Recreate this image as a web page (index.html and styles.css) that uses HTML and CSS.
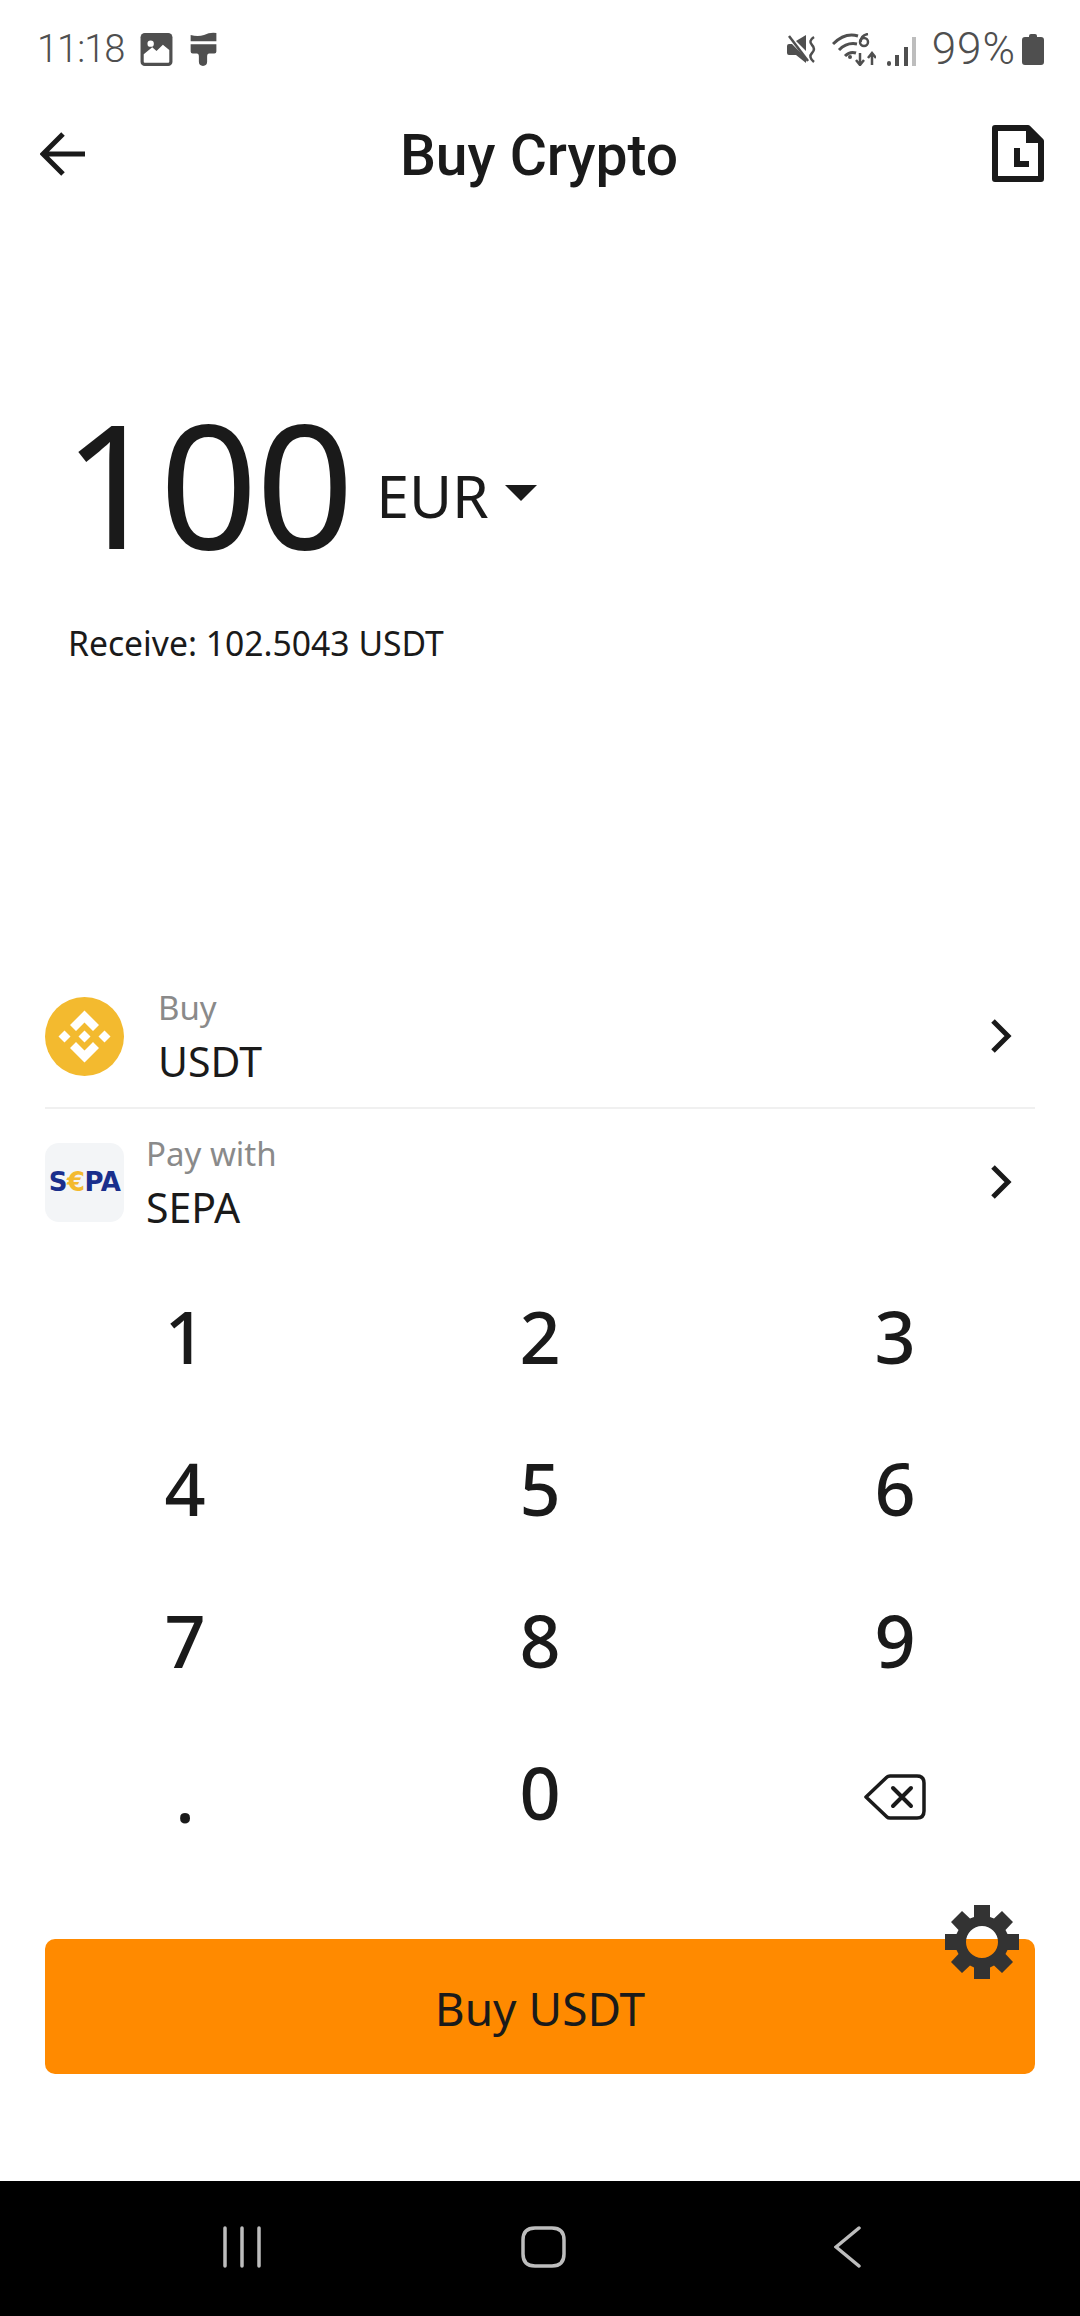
FILE: index.html
```html
<!DOCTYPE html>
<html lang="en">
<head>
<meta charset="utf-8">
<title>Buy Crypto</title>
<link rel="stylesheet" href="styles.css">
</head>
<body>
<div class="screen">
  <div class="status">
    <div class="status-left">
      <span class="time">11:18</span>
      <svg class="ic-image" width="33" height="33" viewBox="0 0 30 31"><rect width="30" height="31" rx="4" fill="#4f4f4f"/><path d="M3 27V20L11 13.500L15 17L21 11L27 16V27Q27 28 26 28H4Q3 28 3 27Z" fill="#fff"/><circle cx="9.500" cy="10" r="3" fill="#fff"/></svg>
      <svg class="ic-brush" width="28" height="35" viewBox="0 0 26 34"><path d="M1 3Q8 5 14 3Q20 0 26 1V9H1Z" fill="#4f4f4f"/><path d="M1 12H26V19Q26 21 24 21H19Q17 21 17 24V29Q17 33 13 33Q9 33 9 29V24Q9 21 7 21H3Q1 21 1 19Z" fill="#4f4f4f"/></svg>
    </div>
    <div class="status-right">
      <svg class="ic-mute" width="30" height="29" viewBox="0 0 30 29"><path d="M0 11Q0 9 2 9H5L19 23V28L9 20H2Q0 20 0 18Z" fill="#4f4f4f"/><path d="M9 6L19 0V16Z" fill="#4f4f4f"/><path d="M2 1L21 26" stroke="#4f4f4f" stroke-width="2.500"/><path d="M27 2Q21 6 25 10Q29 14 25 18Q21 22 27 27" fill="none" stroke="#4f4f4f" stroke-width="2.500"/></svg>
      <svg class="ic-wifi" width="44" height="33" viewBox="0 0 44 33"><path d="M1 11Q13 -1 26 3" fill="none" stroke="#4f4f4f" stroke-width="3"/><path d="M7 17Q15 9 25 11" fill="none" stroke="#4f4f4f" stroke-width="3"/><path d="M13 23Q18 18 24 20" fill="none" stroke="#4f4f4f" stroke-width="3"/><circle cx="18" cy="24" r="2" fill="#4f4f4f"/><circle cx="32" cy="9" r="4" fill="none" stroke="#4f4f4f" stroke-width="2.500"/><path d="M36 1Q29 2 28.500 9" fill="none" stroke="#4f4f4f" stroke-width="2.500"/><path d="M28 20V31M24 27L28 32L32 27M40 32V21M36 25L40 20L44 25" fill="none" stroke="#4f4f4f" stroke-width="2.500"/></svg>
      <svg class="ic-signal" width="30" height="29" viewBox="0 0 30 29"><rect x="0" y="24" width="4" height="5" rx="2" fill="#4f4f4f"/><rect x="8" y="18" width="4" height="11" fill="#4f4f4f"/><rect x="17" y="10" width="4" height="19" fill="#4f4f4f"/><rect x="25" y="0" width="4" height="29" fill="#bdbdbd"/></svg>
      <span class="battery-text">99%</span>
      <svg class="ic-battery" width="22" height="31" viewBox="0 0 22 31"><path d="M7 2Q7 0 9 0H13Q15 0 15 2V3H19Q22 3 22 6V28Q22 31 19 31H3Q0 31 0 28V6Q0 3 3 3H7Z" fill="#4f4f4f"/></svg>
    </div>
  </div>

  <header class="topbar">
    <svg class="top-icon" width="46" height="44" viewBox="0 0 46 44"><path d="M45 22H4M23 2L3 22L23 42" fill="none" stroke="#1a1a1a" stroke-width="5"/></svg>
    <h1 class="title">Buy Crypto</h1>
    <svg class="top-icon" width="52" height="57" viewBox="0 0 52 57"><path d="M3 3H36L49 16V54H3Z" fill="none" stroke="#1a1a1a" stroke-width="6" stroke-linejoin="round"/><path d="M34 3L49 18H34Z" fill="#1a1a1a"/><path d="M25 23V39H37" fill="none" stroke="#1a1a1a" stroke-width="6"/></svg>
  </header>

  <section class="amount">
    <div class="amount-line">
      <span class="value">100</span>
      <span class="currency">EUR</span>
      <svg class="caret" width="32" height="16" viewBox="0 0 32 16"><path d="M0 0H32L16 16Z" fill="#1a1a1a"/></svg>
    </div>
    <p class="receive">Receive: 102.5043 USDT</p>
  </section>

  <section class="options">
    <div class="option option-first">
      <svg class="option-icon" width="79" height="79" viewBox="0 0 79 79"><circle cx="39.500" cy="39.500" r="39.500" fill="#f3ba2f"/><g fill="#fff"><path d="M39.500 13.500L54 28L48 34L39.500 25.500L31 34L25 28Z"/><path d="M39.500 65.500L25 51L31 45L39.500 53.500L48 45L54 51Z"/><path d="M13.500 39.500L19.500 33.500L25.500 39.500L19.500 45.500Z"/><path d="M53.500 39.500L59.500 33.500L65.500 39.500L59.500 45.500Z"/><path d="M33.500 39.500L39.500 33.500L45.500 39.500L39.500 45.500Z"/></g></svg>
      <div class="option-text option-text-buy">
        <span class="option-label">Buy</span>
        <span class="option-value">USDT</span>
      </div>
      <svg class="chevron" width="24" height="36" viewBox="0 0 24 36"><path d="M4 3L19 18L4 33" fill="none" stroke="#1a1a1a" stroke-width="5"/></svg>
    </div>
    <div class="option option-second">
      <div class="sepa-tile"><span class="sepa">S<em class="sepa-euro">€</em>PA</span></div>
      <div class="option-text">
        <span class="option-label">Pay with</span>
        <span class="option-value">SEPA</span>
      </div>
      <svg class="chevron" width="24" height="36" viewBox="0 0 24 36"><path d="M4 3L19 18L4 33" fill="none" stroke="#1a1a1a" stroke-width="5"/></svg>
    </div>
  </section>

  <section class="keypad">
    <div class="key">1</div><div class="key">2</div><div class="key">3</div>
    <div class="key">4</div><div class="key">5</div><div class="key">6</div>
    <div class="key">7</div><div class="key">8</div><div class="key">9</div>
    <div class="key key-dot">.</div><div class="key">0</div>
    <div class="key"><svg class="backspace" width="62" height="46" viewBox="0 0 62 46"><path d="M2 23L23 3Q24 2 26 2H53Q60 2 60 9V37Q60 44 53 44H26Q24 44 23 43Z" fill="none" stroke="#1a1a1a" stroke-width="3.500" stroke-linejoin="round"/><path d="M29 14L47 32M47 14L29 32" stroke="#1a1a1a" stroke-width="4" stroke-linecap="round"/></svg></div>
  </section>

  <div class="cta">
    <button class="buy" type="button">Buy USDT</button>
    <svg class="gear" width="74" height="74" viewBox="0 0 74 74"><path fill="#333" fill-rule="evenodd" d="M29 0H45V12L49 13.500L57 6L68 17L60.500 25L62.500 29H74V45H62.500L60.500 49L68 57L57 68L49 60.500L45 62.500V74H29V62.500L25 60.500L17 68L6 57L13.500 49L11.500 45H0V29H11.500L13.500 25L6 17L17 6L25 13.500L29 12ZM37 21A16 16 0 1 0 37 53A16 16 0 1 0 37 21Z"/></svg>
  </div>

  <nav class="navbar">
    <svg width="40" height="42" viewBox="0 0 40 42"><path d="M3 2V40M20 2V40M37 2V40" stroke="#bdbdbd" stroke-width="3.500" stroke-linecap="round"/></svg>
    <svg width="45" height="42" viewBox="0 0 45 42"><path d="M14 2H31Q43 2 43 14V28Q43 40 31 40H14Q2 40 2 28V14Q2 2 14 2Z" fill="none" stroke="#bdbdbd" stroke-width="3.500"/></svg>
    <svg width="27" height="42" viewBox="0 0 27 42"><path d="M25 2L2 21L25 40" fill="none" stroke="#bdbdbd" stroke-width="3.500" stroke-linecap="round"/></svg>
  </nav>
</div>
</body>
</html>
```
FILE: styles.css
```css
* { box-sizing: border-box; }
html, body { margin: 0; padding: 0; background: #fff; }
.screen {
  width: 1080px;
  height: 2316px;
  display: flex;
  flex-direction: column;
  color: #1a1a1a;
  font-family: "Noto Sans", sans-serif;
  overflow: hidden;
}
.status {
  height: 100px;
  padding: 28px 36px 0 37px;
  display: flex;
  justify-content: space-between;
  align-items: flex-start;
  color: #4f4f4f;
  font-family: Roboto, sans-serif;
}
.status-left, .status-right { display: flex; align-items: center; height: 42px; }
.time { font-size: 38px; font-weight: 300; letter-spacing: -1px; line-height: 42px; }
.ic-image { margin-left: 16px; }
.ic-brush { margin-left: 16px; }
.ic-wifi { margin-left: 15px; }
.ic-signal { margin-left: 11px; margin-top: 4px; }
.battery-text { font-size: 44px; font-weight: 300; letter-spacing: 1px; margin-left: 15px; line-height: 42px; }
.ic-battery { margin-left: 6px; }
.topbar {
  height: 110px;
  padding: 0 36px 0 40px;
  display: flex;
  align-items: center;
  justify-content: space-between;
}
.top-icon { margin-bottom: 3px; }
.title {
  margin: 2px 0 0;
  font-family: Roboto, sans-serif;
  font-size: 57px;
  font-weight: 500;
  line-height: 60px;
}
.amount { padding: 172px 0 0 63px; height: 763px; }
.amount-line { display: flex; align-items: center; height: 200px; }
.value { font-size: 172px; line-height: 200px; letter-spacing: -2px; }
.currency { font-size: 59px; margin-left: 24px; padding-top: 26px; }
.caret { margin-left: 16px; margin-top: 22px; }
.receive { margin: 39px 0 0 5px; font-size: 33.700px; line-height: 44px; }
.options { padding: 0 45px; }
.option { display: flex; align-items: center; position: relative; }
.option-first { border-bottom: 2px solid #f0f0f0; height: 136px; padding-bottom: 8px; }
.option-second { height: 146px; }
.option-icon { flex: none; }
.option-text { display: flex; flex-direction: column; margin-left: 22px; flex: 1; padding-top: 4px; }
.option-text-buy { margin-left: 34px; }
.option-label { font-size: 33px; line-height: 46px; color: #8a8a8a; }
.option-value { font-size: 41px; line-height: 60px; }
.chevron { margin-right: 22px; }
.sepa-tile {
  width: 79px;
  height: 79px;
  flex: none;
  border-radius: 14px;
  background: #f3f5f7;
  display: flex;
  align-items: center;
  justify-content: center;
}
.sepa {
  font-family: "DejaVu Sans", sans-serif;
  font-weight: 700;
  font-size: 26px;
  letter-spacing: -0.5px;
  color: #1a2f8c;
}
.sepa-euro { font-style: normal; color: #f3ba2f; }
.keypad {
  display: grid;
  grid-template-columns: repeat(3, 355px);
  grid-auto-rows: 152px;
  justify-content: center;
  padding-top: 5px;
}
.key {
  display: flex;
  align-items: center;
  justify-content: center;
  font-size: 72px;
  font-weight: 500;
  line-height: 80px;
}
.key-dot { padding-top: 6px; }
.backspace { margin-top: 10px; }
.cta { position: relative; padding: 0 45px; margin-top: 71px; }
.buy {
  display: block;
  width: 100%;
  height: 135px;
  border: 0;
  border-radius: 10px;
  background: #ff8a00;
  color: #1a1a1a;
  font-family: "Noto Sans", sans-serif;
  font-size: 46px;
  padding: 2px 0 0;
}
.gear { position: absolute; right: 61px; top: -34px; }
.navbar {
  margin-top: auto;
  height: 135px;
  background: #000;
  display: flex;
  align-items: flex-start;
  padding: 45px 0 0 222px;
}
.navbar svg:nth-child(2) { margin-left: 259px; }
.navbar svg:nth-child(3) { margin-left: 268px; }
```
